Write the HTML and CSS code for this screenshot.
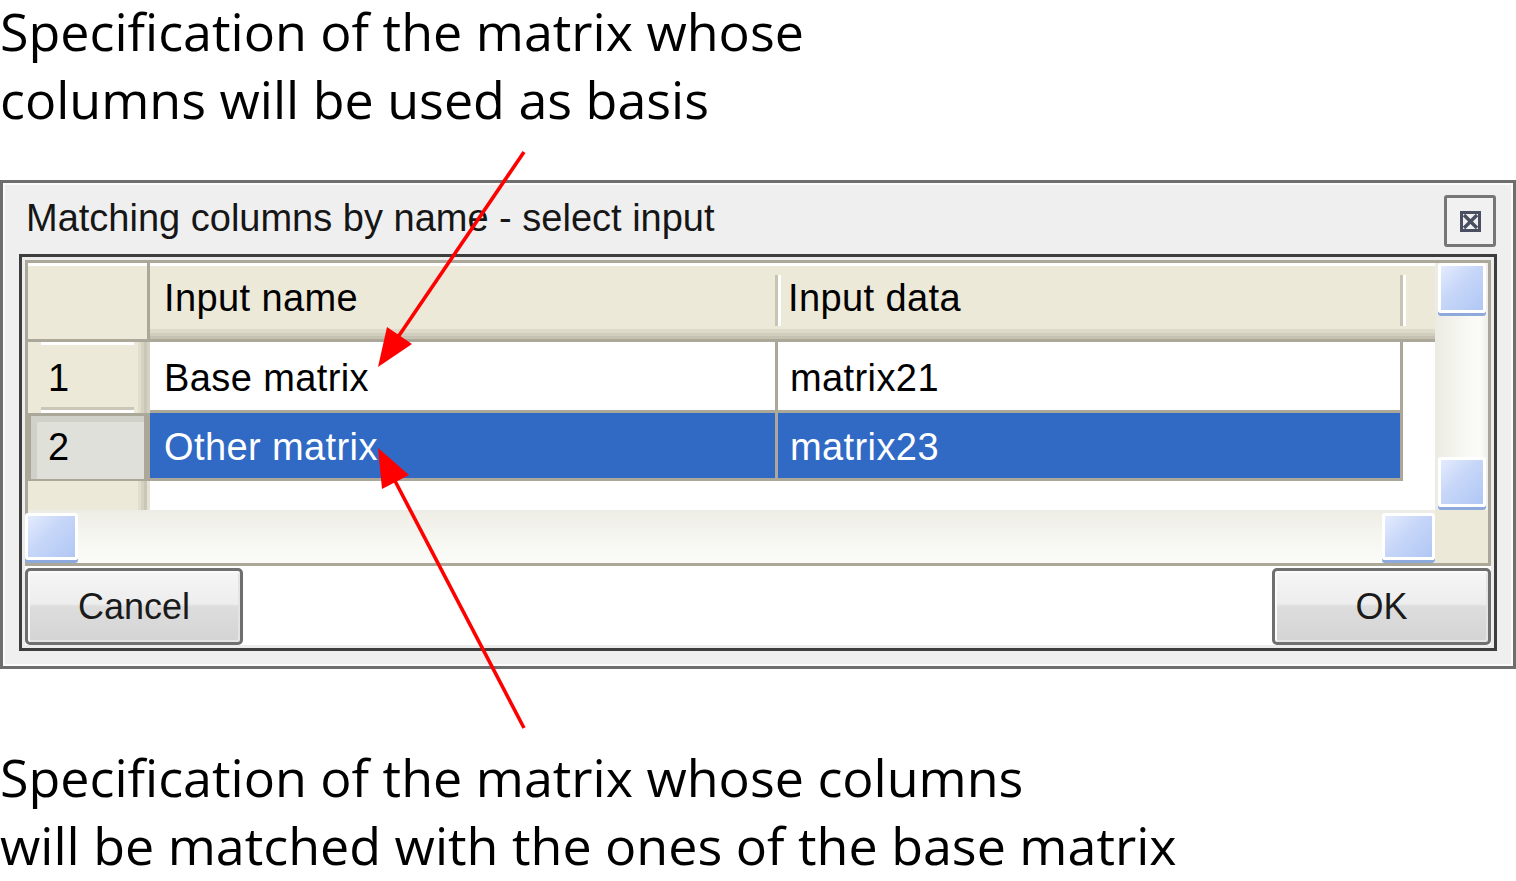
FILE: index.html
```html
<!DOCTYPE html>
<html>
<head>
<meta charset="utf-8">
<title>Matching columns by name</title>
<link rel="stylesheet" href="styles.css">
</head>
<body>
<div class="page">
  <div class="note note-top">
    <p class="line">Specification of the matrix whose</p>
    <p class="line">columns will be used as basis</p>
  </div>

  <div class="dialog">
    <div class="titlebar">
      <div class="title">Matching columns by name - select input</div>
      <div class="close">
        <svg width="21" height="21" viewBox="0 0 21 21"><rect x="1.5" y="1.5" width="18" height="18" fill="none" stroke="#4b4f62" stroke-width="3"/><path d="M4 4L17 17M17 4L4 17" stroke="#4b4f62" stroke-width="3.4"/></svg>
      </div>
    </div>

    <div class="frame">
      <div class="grid">
        <div class="main">
          <div class="hrow">
            <div class="corner"></div>
            <div class="hcell hc1">Input name</div>
            <div class="hcell hc2">Input data</div>
            <div class="hfill"></div>
          </div>
          <div class="row row1">
            <div class="rh rh1">1</div>
            <div class="cell c1">Base matrix</div>
            <div class="cell c2">matrix21</div>
            <div class="fill"></div>
          </div>
          <div class="row row2 sel">
            <div class="rh rh2">2</div>
            <div class="cell c1">Other matrix</div>
            <div class="cell c2">matrix23</div>
            <div class="fill"></div>
          </div>
          <div class="rest">
            <div class="rh-rest"></div>
            <div class="fill"></div>
          </div>
        </div>
        <div class="vscroll">
          <div class="thumb"></div>
          <div class="thumb"></div>
        </div>
        <div class="hscroll">
          <div class="thumb thumb-first"></div>
          <div class="thumb"></div>
        </div>
        <div class="sbcorner"></div>
      </div>
      <div class="buttons">
        <div class="btn btn-cancel">Cancel</div>
        <div class="btn btn-ok">OK</div>
      </div>
    </div>
  </div>

  <div class="note note-bottom">
    <p class="line">Specification of the matrix whose columns</p>
    <p class="line">will be matched with the ones of the base matrix</p>
  </div>

  <svg class="arrows" width="1516" height="881" viewBox="0 0 1516 881">
    <line x1="524" y1="152" x2="396" y2="340" stroke="#ff0000" stroke-width="3.6"/>
    <polygon points="378,367 387,327 412,344" fill="#ff0000"/>
    <line x1="524" y1="728" x2="394" y2="479" stroke="#ff0000" stroke-width="3.6"/>
    <polygon points="378,448 382,489 409,475" fill="#ff0000"/>
  </svg>
</div>
</body>
</html>
```

FILE: styles.css
```css
html, body {
  margin: 0;
  padding: 0;
  background: #ffffff;
}

.page {
  position: relative;
  width: 1516px;
  height: 881px;
}

.note {
  font-family: "Open Sans", "DejaVu Sans", sans-serif;
  font-size: 52px;
  color: #000;
  white-space: nowrap;
}

.note .line {
  margin: 0;
  line-height: 58px;
}

.note .line + .line {
  margin-top: 10px;
}

.note-top {
  padding-top: 2px;
  height: 133px;
}

.note-bottom {
  margin-top: 79px;
}

/* dialog */
.dialog {
  margin-top: 45px;
  height: 489px;
  box-sizing: border-box;
  border: 3px solid #6e6e6e;
  background: #efefef;
  box-shadow: inset 0 0 0 2px #fbfbfb;
  display: flex;
  flex-direction: column;
}

.titlebar {
  height: 71px;
  flex: none;
  box-sizing: border-box;
  display: flex;
  justify-content: space-between;
  align-items: flex-start;
  padding: 0 17px 0 23px;
}

.title {
  margin-top: 14px;
  font-family: "Liberation Sans", Arial, sans-serif;
  font-size: 38px;
  color: #161616;
  white-space: nowrap;
}

.close {
  margin-top: 12px;
  width: 52px;
  height: 52px;
  box-sizing: border-box;
  border: 3px solid #767676;
  border-radius: 3px;
  background: #f1f1f1;
  display: flex;
  align-items: center;
  justify-content: center;
}

.frame {
  margin: 0 16px;
  height: 397px;
  flex: none;
  box-sizing: border-box;
  border: 3px solid #3d3d3d;
  padding: 3px;
  background: #ffffff;
  box-shadow: inset 0 0 0 3px #ececec;
  display: flex;
  flex-direction: column;
}

/* grid */
.grid {
  height: 306px;
  flex: none;
  box-sizing: border-box;
  border: 3px solid #aca899;
  display: grid;
  grid-template-columns: 1fr 53px;
  grid-template-rows: 1fr 53px;
  font-family: "Liberation Sans", Arial, sans-serif;
  font-size: 38px;
  letter-spacing: 0.4px;
  color: #000;
}

.main {
  grid-column: 1;
  grid-row: 1;
  overflow: hidden;
  background: #ffffff;
  display: flex;
  flex-direction: column;
}

.hrow {
  height: 79px;
  flex: none;
  box-sizing: border-box;
  border-bottom: 3px solid #aca899;
  background: linear-gradient(#ffffff 0 3px, #ece9d8 3px);
  display: flex;
}

.corner {
  width: 119px;
  flex: none;
  border-right: 3px solid #aca899;
}

.hcell {
  position: relative;
  flex: none;
  box-sizing: border-box;
  line-height: 70px;
  white-space: nowrap;
  background: linear-gradient(to top, #c6c2b2 0 3px, #d2cebe 3px 6px, #dedac9 6px 10px, transparent 10px);
}

.hc1 {
  width: 625px;
  padding-left: 14px;
}

.hc2 {
  width: 625px;
  padding-left: 13px;
}

.hc2::before,
.hfill::before {
  content: "";
  position: absolute;
  left: 0;
  top: 12px;
  width: 6px;
  height: 51px;
  background: linear-gradient(to right, #c7c4b3 50%, #ffffff 50%);
}

.hfill {
  position: relative;
  flex: 1;
  background: linear-gradient(to top, #c6c2b2 0 3px, #d2cebe 3px 6px, #dedac9 6px 10px, transparent 10px);
}

.row {
  display: flex;
  flex: none;
}

.row1 {
  height: 71px;
}

.row2 {
  height: 68px;
}

.cell {
  box-sizing: border-box;
  flex: none;
  border-right: 3px solid #aca899;
  border-bottom: 3px solid #aca899;
  white-space: nowrap;
}

.row1 .cell {
  padding-top: 5px;
  line-height: 62px;
}

.row2 .cell {
  padding-top: 4px;
  line-height: 61px;
}

.c1 {
  width: 628px;
  padding-left: 14px;
}

.c2 {
  width: 625px;
  padding-left: 12px;
}

.sel .cell {
  background: #316ac5;
  color: #ffffff;
}

.fill {
  flex: 1;
  background: #ffffff;
}

.rh {
  position: relative;
  width: 122px;
  flex: none;
  box-sizing: border-box;
  white-space: nowrap;
}

.rh1 {
  padding-left: 20px;
  padding-top: 5px;
  line-height: 62px;
  background: linear-gradient(to right, #ece9d8 0 110px, #e2decd 110px 113px, #d6d2c2 113px 116px, #cbc7b8 116px 119px, #d6d2c2 119px);
}

.rh1::before {
  content: "";
  position: absolute;
  top: 0;
  left: 13px;
  width: 93px;
  height: 3px;
  background: #ffffff;
}

.rh1::after {
  content: "";
  position: absolute;
  bottom: 3px;
  left: 13px;
  width: 93px;
  height: 3px;
  background: #cbc7b8;
  box-shadow: 0 3px 0 #ffffff;
}

.rh2 {
  border-style: solid;
  border-color: #aca899;
  border-width: 3px 6px 2px 3px;
  padding-left: 17px;
  padding-top: 1px;
  line-height: 61px;
  background: #dfe0da;
  box-shadow: inset 6px 6px 0 #d0d1c9;
}

.rest {
  flex: 1;
  display: flex;
}

.rh-rest {
  width: 122px;
  flex: none;
  background: linear-gradient(to right, #ece9d8 0 110px, #e2decd 110px 113px, #d6d2c2 113px 116px, #cbc7b8 116px 119px, #e6e3d4 119px);
}

/* scrollbars */
.thumb {
  flex: none;
  border: 3px solid #ffffff;
  border-radius: 3px;
  background: linear-gradient(135deg, #e4ebfd 0%, #c6d6f8 45%, #b0c7f4 100%);
  box-shadow: 0 3px 0 #8eaadc;
}

.vscroll {
  grid-column: 2;
  grid-row: 1;
  background: linear-gradient(to right, #ecebe3, #f8f8f4 60%, #fbfbf8 85%, #efeee8);
  display: flex;
  flex-direction: column;
  justify-content: space-between;
  padding: 0 0 3px 3px;
}

.vscroll .thumb {
  width: 42px;
  height: 44px;
}

.hscroll {
  grid-column: 1;
  grid-row: 2;
  background: linear-gradient(#edece4, #f6f6f1 50%, #fbfbf8);
  display: flex;
  justify-content: space-between;
  align-items: flex-start;
  padding-top: 3px;
}

.hscroll .thumb {
  width: 47px;
  height: 41px;
}

.hscroll .thumb-first {
  margin-left: -3px;
}

.sbcorner {
  grid-column: 2;
  grid-row: 2;
  background: #ece9d8;
}

/* buttons */
.buttons {
  flex: 1;
  display: flex;
  justify-content: space-between;
  align-items: flex-start;
  padding-top: 2px;
}

.btn {
  height: 77px;
  box-sizing: border-box;
  border: 3px solid #6f6f6f;
  border-radius: 5px;
  background: linear-gradient(#f6f6f6 0%, #ededed 46%, #dddddd 50%, #d4d4d4 100%);
  box-shadow: inset 2px 2px 0 #fbfbfb, inset -2px -2px 0 #e4e4e4;
  display: flex;
  align-items: center;
  justify-content: center;
  font-family: "Liberation Sans", Arial, sans-serif;
  font-size: 36px;
  color: #1a1a1a;
}

.btn-cancel {
  width: 218px;
}

.btn-ok {
  width: 219px;
}

/* annotation arrows overlay */
.arrows {
  position: absolute;
  left: 0;
  top: 0;
  pointer-events: none;
}
```
